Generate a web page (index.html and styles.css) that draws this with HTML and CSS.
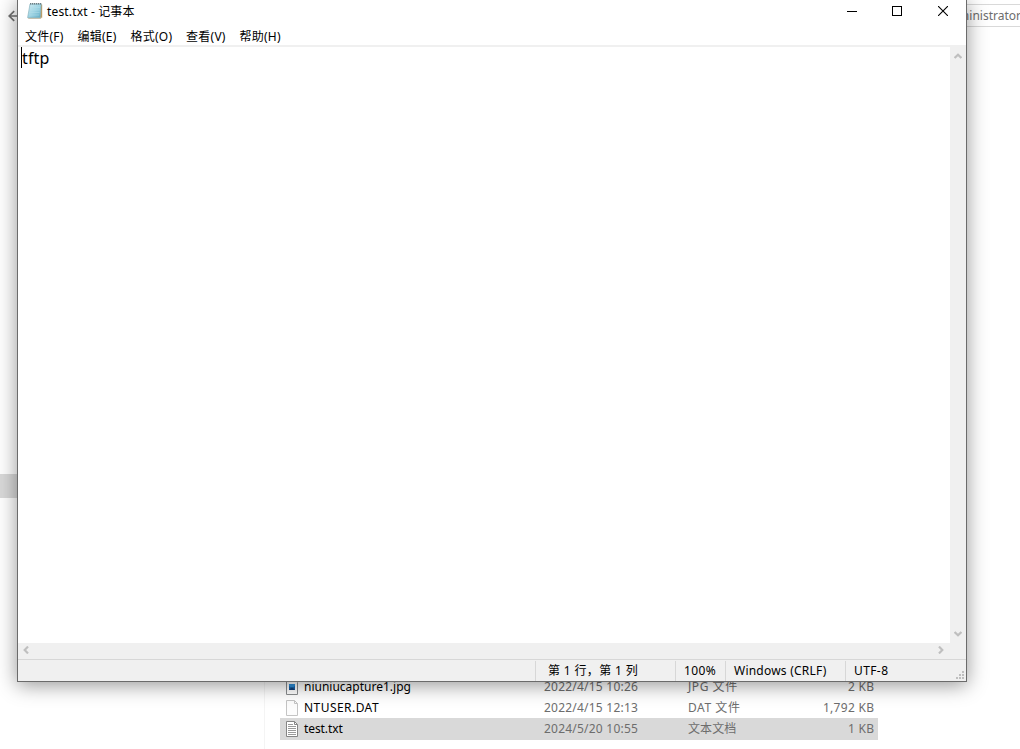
FILE: index.html
```html
<!DOCTYPE html>
<html lang="zh-CN">
<head>
<meta charset="utf-8">
<title>test.txt - 记事本</title>
<link rel="stylesheet" href="styles.css">
</head>
<body>
<div class="explorer">
  <header class="address">
    <svg class="back" width="14" height="12" viewBox="0 0 14 12"><path d="M6.2 1.2 1.2 6l5 4.8M1.5 6H14" fill="none" stroke="#727272" stroke-width="1.7"/></svg>
    <div class="path"><span class="path-text">ministrator</span></div>
  </header>
  <div class="explorer-body">
    <nav class="tree"><div class="tree-selected"></div></nav>
    <div class="files">
      <div class="row">
        <svg class="file-icon" width="12" height="16" viewBox="0 0 12 16"><path d="M.5.5h8l3 3v12H.5z" fill="#fff" stroke="#8a8d8f"/><path d="M3 5h6v6H3z" fill="#1763ac"/><path d="M3 5h6v2L6 9 3 7z" fill="#2d8fda"/><path d="m3 11 3-3 3 3z" fill="#123e75"/></svg>
        <span class="name n1">niuniucapture1.jpg</span><span class="date">2022/4/15 10:26</span><span class="type">JPG 文件</span><span class="size">2 KB</span>
      </div>
      <div class="row">
        <svg class="file-icon" width="12" height="16" viewBox="0 0 12 16"><path d="M.5.5h8l3 3v12H.5z" fill="#fcfcfc" stroke="#c4c4c4"/><path d="M8.5.5v3h3" fill="none" stroke="#c4c4c4"/></svg>
        <span class="name n2">NTUSER.DAT</span><span class="date">2022/4/15 12:13</span><span class="type">DAT 文件</span><span class="size">1,792 KB</span>
      </div>
      <div class="row selected">
        <svg class="file-icon" width="12" height="16" viewBox="0 0 12 16"><path d="M.5.5h8l3 3v12H.5z" fill="#fff" stroke="#858585"/><path d="M8.5.5v3h3" fill="none" stroke="#858585"/><path d="M2 3.5h5M2 5.5h8M2 7.5h8M2 9.5h8M2 11.5h8M2 13.5h8" stroke="#9a9a9a"/></svg>
        <span class="name n3">test.txt</span><span class="date">2024/5/20 10:55</span><span class="type plain">文本文档</span><span class="size">1 KB</span>
      </div>
    </div>
  </div>
</div>

<div class="window">
  <header class="titlebar">
    <svg class="app-icon" width="16" height="18" viewBox="0 0 16 18">
      <defs><linearGradient id="pad" x1="0" y1="0" x2="1" y2="1"><stop offset="0" stop-color="#d3edf3"/><stop offset=".5" stop-color="#a0d5e4"/><stop offset="1" stop-color="#5faac4"/></linearGradient></defs>
      <path d="M14 2.5h1.2v13.3H13z" fill="#b99d69"/>
      <path d="M1 15.8h12.6l.8.8H1.4z" fill="#a48b62"/>
      <path d="M3 2h11.2l-1 13.7H.6z" fill="url(#pad)" stroke="#7aa9b7" stroke-width=".6"/>
      <path d="M3 5.5h10M2.8 8h10M2.5 10.5h10M2.2 13h10" stroke="#b5dde8" stroke-width=".5"/>
      <path d="M3.2 1.8h11" stroke="#53656b" stroke-width="1.6" stroke-dasharray="1 1"/>
    </svg>
    <span class="title">test.txt - 记事本</span>
    <div class="controls">
      <svg width="10" height="10" viewBox="0 0 10 10" shape-rendering="crispEdges"><path d="M0 5.5h10" stroke="#000"/></svg>
      <svg width="10" height="10" viewBox="0 0 10 10" shape-rendering="crispEdges"><path d="M.5.5h9v9h-9z" fill="none" stroke="#000"/></svg>
      <svg width="10" height="10" viewBox="0 0 10 10"><path d="m0 0 10 10M10 0 0 10" stroke="#000" stroke-width="1.1"/></svg>
    </div>
  </header>
  <nav class="menu"><span>文件(F)</span><span>编辑(E)</span><span>格式(O)</span><span>查看(V)</span><span>帮助(H)</span></nav>
  <div class="editor">
    <div class="text"><i class="caret"></i><span class="content">tftp</span></div>
    <div class="vscroll">
      <svg width="8" height="6" viewBox="0 0 8 6"><path d="M.6 5 4 1.7 7.4 5" fill="none" stroke="#bfbfbf" stroke-width="2.2"/></svg>
      <svg width="8" height="6" viewBox="0 0 8 6"><path d="M.6 1 4 4.3 7.4 1" fill="none" stroke="#bfbfbf" stroke-width="2.2"/></svg>
    </div>
  </div>
  <div class="hscroll">
    <svg width="6" height="8" viewBox="0 0 6 8"><path d="M5 .6 1.7 4 5 7.4" fill="none" stroke="#bfbfbf" stroke-width="2.2"/></svg>
    <svg width="6" height="8" viewBox="0 0 6 8"><path d="M1 .6 4.3 4 1 7.4" fill="none" stroke="#bfbfbf" stroke-width="2.2"/></svg>
  </div>
  <footer class="status">
    <span class="cell position">第 1 行，第 1 列</span>
    <span class="cell zoom">100%</span>
    <span class="cell newline">Windows (CRLF)</span>
    <span class="cell encoding">UTF-8</span>
    <svg class="grip" width="8" height="8" viewBox="0 0 8 8" shape-rendering="crispEdges"><path d="M6 0h2v2H6zM3 3h2v2H3zM6 3h2v2H6zM0 6h2v2H0zM3 6h2v2H3zM6 6h2v2H6z" fill="#bfbfbf"/></svg>
  </footer>
</div>
</body>
</html>
```
FILE: styles.css
```css
* { box-sizing: border-box; }
body {
  margin: 0;
  width: 1020px;
  height: 749px;
  overflow: hidden;
  position: relative;
  background: #fff;
  color: #000;
  font: 12px/16px "Noto Sans", "Noto Sans CJK SC", sans-serif;
  white-space: nowrap;
}
svg { display: block; flex: none; }

.explorer { display: flex; flex-direction: column; height: 749px; }
.address { display: flex; justify-content: space-between; height: 30px; padding: 4px 0 0 8px; }
.back { margin-top: 6px; }
.path {
  display: flex;
  justify-content: flex-end;
  width: 700px;
  height: 23px;
  border: solid #d9d9d9;
  border-width: 1px 0;
  line-height: 22px;
  color: #6d6d6d;
}
.path-text { margin-right: -1px; }
.explorer-body { display: flex; flex: 1; }
.tree { width: 265px; border-right: 1px solid #f4f4f4; padding-top: 444px; }
.tree-selected { height: 24px; width: 240px; background: #d9d9d9; }
.files { width: 613px; padding: 646px 0 0 15px; }
.row { display: flex; align-items: center; height: 21px; padding: 0 4px 0 6px; color: #6d6d6d; }
.row.selected { height: 22px; background: #d9d9d9; }
.file-icon { margin-right: 6px; }
.name { width: 240px; color: #000; }
.n2 { letter-spacing: .45px; }
.n3 { letter-spacing: -.1px; }
.date { width: 144px; letter-spacing: .22px; }
.type { width: 100px; letter-spacing: .55px; }
.type.plain { letter-spacing: .1px; }
.size { flex: 1; text-align: right; letter-spacing: .3px; margin-right: -.3px; }

.window {
  position: absolute;
  left: 17px;
  top: -1px;
  width: 950px;
  height: 683px;
  display: flex;
  flex-direction: column;
  border: 1px solid #6b6b6b;
  background: #fff;
  box-shadow: 0 3px 19px rgba(0, 0, 0, .42);
}
.titlebar { display: flex; align-items: center; height: 24px; padding-left: 9px; }
.app-icon { margin: -2px 4px 0 0; }
.title { letter-spacing: .15px; }
.controls { display: flex; gap: 36px; margin: -2px 18px 0 auto; }
.controls svg:first-child { margin-right: -1px; }
.menu { display: flex; gap: 13.8px; height: 21px; padding: 5px 0 0 7px; letter-spacing: .25px; }
.editor { display: flex; flex: 1; border-top: 2px solid #f0f0f0; }
.text { display: flex; flex: 1; padding: 0 0 0 3px; font-size: 16px; line-height: 22px; }
.caret { width: 1px; height: 21px; background: #000; }
.content { letter-spacing: .15px; }
.vscroll {
  display: flex;
  flex-direction: column;
  justify-content: space-between;
  align-items: center;
  width: 16px;
  padding: 6px 1px 6px 0;
  background: #f0f0f0;
}
.hscroll {
  display: flex;
  justify-content: space-between;
  align-items: flex-start;
  height: 16px;
  padding: 3px 22px 0 5px;
  background: #f0f0f0;
}
.status {
  display: flex;
  justify-content: flex-end;
  height: 22px;
  padding-top: 1px;
  border-top: 1px solid #d7d7d7;
  background: #f0f0f0;
}
.cell { height: 20px; border-left: 1px solid #d7d7d7; padding-left: 8px; line-height: 20px; }
.position { width: 140px; padding-left: 12px; letter-spacing: .35px; }
.zoom { width: 50px; letter-spacing: .4px; }
.newline { width: 120px; letter-spacing: .22px; }
.encoding { width: 111px; letter-spacing: .4px; }
.grip { align-self: flex-end; margin: 0 2px 2px 0; }
```
